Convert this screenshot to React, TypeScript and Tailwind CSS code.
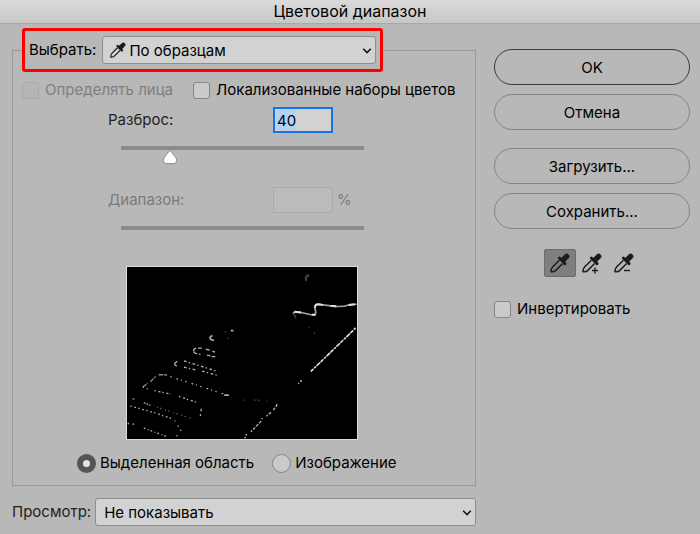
import React, { useState } from 'react';
import clsx from 'clsx';

const PREVIEW_MODES = ['Не показывать', 'Градации серого', 'Черная подложка', 'Белая подложка'];
const SELECT_MODES = ['По образцам', 'Красные', 'Желтые', 'Зеленые', 'Света', 'Тени'];

interface DropperProps {
  sign?: 'plus' | 'minus';
  className?: string;
}

function Dropper({ sign, className }: DropperProps) {
  return (
    <svg viewBox="0 0 20 20" className={className} fill="none" aria-hidden="true">
      <path
        d="M9.4 7.2 2.6 14Q.8 15.8 1 18.8Q4 19.2 5.8 17.4L12.6 10.4"
        stroke="#1c1c1c"
        strokeWidth="1.5"
        strokeLinejoin="round"
      />
      <path d="M9.4 5 15 10.6" stroke="#1c1c1c" strokeWidth="3" strokeLinecap="round" />
      <path d="M11.4 8.6 14.4 5.6" stroke="#1c1c1c" strokeWidth="5" />
      <path d="M14.2 5.8 16.6 3.4" stroke="#1c1c1c" strokeWidth="5.4" strokeLinecap="round" />
      {sign && <path d="M10 17.5h6" stroke="#1c1c1c" strokeWidth="1.4" />}
      {sign === 'plus' && <path d="M13 14.5v6" stroke="#1c1c1c" strokeWidth="1.4" />}
    </svg>
  );
}

interface DropdownProps {
  id: string;
  options: string[];
  icon?: React.ReactNode;
}

function Dropdown({ id, options, icon }: DropdownProps) {
  return (
    <div className="relative min-w-0 flex-1">
      {icon && <span className="pointer-events-none absolute inset-y-0 left-2 flex items-center">{icon}</span>}
      <select
        id={id}
        className={clsx(
          'block h-7 w-full appearance-none rounded-[3px] border border-[#8e8e8e] bg-[#d2d2d2] pr-6 pt-0.5 text-black outline-none',
          icon ? 'pl-[26px]' : 'pl-2'
        )}
      >
        {options.map((option) => (
          <option key={option}>{option}</option>
        ))}
      </select>
      <svg
        viewBox="0 0 10 6"
        className="pointer-events-none absolute right-1 top-3 h-[6px] w-[10px]"
        fill="none"
        aria-hidden="true"
      >
        <path d="M1.2 .8 5 4.6 8.8 .8" stroke="#111" strokeWidth="1.5" />
      </svg>
    </div>
  );
}

interface CheckProps {
  label: string;
  disabled?: boolean;
}

function Check({ label, disabled }: CheckProps) {
  return (
    <label className={clsx('flex items-center gap-1.5', disabled && 'text-[#7f7f7f]')}>
      <input
        type="checkbox"
        disabled={disabled}
        className="size-[17px] shrink-0 appearance-none rounded-[3px] border border-[#868686] bg-[#cbcacb] checked:bg-[#555] disabled:border-[#a9a9a9] disabled:bg-[#b5b5b5]"
      />
      <span className="whitespace-nowrap">{label}</span>
    </label>
  );
}

interface ViewRadioProps {
  label: string;
  defaultChecked?: boolean;
}

function ViewRadio({ label, defaultChecked }: ViewRadioProps) {
  return (
    <label className="flex items-center gap-1">
      <input
        type="radio"
        name="view"
        defaultChecked={defaultChecked}
        className="size-[19px] appearance-none rounded-full border border-[#868686] bg-[#cbcacb] checked:border-6 checked:border-[#555] checked:bg-[#e6e6e6]"
      />
      <span className="whitespace-nowrap">{label}</span>
    </label>
  );
}

interface RangeProps {
  label: string;
  value: number;
  max: number;
  disabled?: boolean;
  onChange?: (value: number) => void;
}

function Range({ label, value, max, disabled, onChange }: RangeProps) {
  return (
    <div className="relative h-5 w-full">
      <div className="h-1 bg-[#8b8b8b]" />
      {!disabled && (
        <svg
          viewBox="0 0 16 16"
          className="absolute top-1 size-4 -translate-x-1/2"
          style={{ left: `${(value / max) * 100}%` }}
          aria-hidden="true"
        >
          <path
            d="M8 .8Q8.6 .8 9.1 1.6L13.6 7.3Q14.8 9 14.6 10.8Q14.3 13.6 12 13.6H4Q1.7 13.6 1.4 10.8Q1.2 9 2.4 7.3L6.9 1.6Q7.4 .8 8 .8Z"
            fill="#fff"
            stroke="#8d8d8d"
          />
        </svg>
      )}
      <input
        type="range"
        aria-label={label}
        min={0}
        max={max}
        value={value}
        disabled={disabled}
        onChange={(e) => onChange?.(Number(e.target.value))}
        className="absolute inset-0 w-full opacity-0"
      />
    </div>
  );
}

function RangeMask() {
  return (
    <svg
      viewBox="18 18 696 522"
      className="h-[174px] w-[232px] border border-[#dcdcdc] bg-black"
      fill="none"
      stroke="#b4b4b4"
      strokeWidth="4"
      aria-hidden="true"
    >
      {/* fingers */}
      <path d="M332 211h8M276 226Q264 232 272 238L281 241" strokeWidth="5" />
      <path d="M316 213v4M323 232v4" stroke="#444" />
      <path d="M219 274Q219 264 230 264L244 264M256 267l12 3M276 273l8 3M219 275Q222 282 240 283M260 286l10 1M274 290h11" strokeDasharray="14 5" />
      <path d="M170 304Q154 313 168 319" />
      <path d="M190 303 292 335M190 322 228 331M245 334 295 348" strokeDasharray="8 7 4 8" />
      <path d="M65 382 80 370M88 366 104 350M113 345H135" strokeDasharray="14 3" stroke="#8a8a8a" />
      <path d="M135 346 312 404" strokeDasharray="3 11 4 16 5 9" />
      <path d="M312 407h14" strokeWidth="5" />
      <path d="M65 382 80 388M100 393 150 404M175 411 232 430" strokeDasharray="4 9 6 6" />
      <path d="M242 448v8M240 465v5" />
      <path d="M34 418h5M68 430 88 438" strokeDasharray="5 4" />
      <path d="M108 443 212 478" stroke="#666" strokeDasharray="3 7 4 12" />
      <path d="M27 440 100 460 155 479M161 485h3M172 499v4M180 512v5M170 529 161 538" strokeDasharray="4 9 5 7" />
      <path d="M19 493h4M34 495h5M68 507 136 532" strokeDasharray="5 8 3 6" />

      {/* wrist and sleeve */}
      <path d="M570 43Q556 44 561 60" stroke="#444" strokeWidth="7" />
      <path
        d="M523 160Q520 154 530 154L545 156 572 162 588 163Q592 156 587 143Q586 131 598 131L635 136Q670 141 690 133L714 131"
        stroke="#a6a6a6"
        strokeWidth="5"
      />
      <path d="M526 154 545 156M578 163h10M588 142Q586 131 598 131L612 133M635 136 652 137M690 133 708 131" stroke="#e2e2e2" strokeWidth="6" />
      <path d="M523 160 530 173M570 201v3M584 219h4" stroke="#444" />
      <path d="M575 335 712 202" stroke="#a0a0a0" strokeWidth="3" />
      <path d="M575 335 712 202" stroke="#dedede" strokeWidth="5" strokeDasharray="10 5 6 4 14 3" />
      <path d="M542 364h6M536 371h4" />
      <path d="M370 422h5M401 422h24M440 425h4" stroke="#333" strokeDasharray="8 4" />
      <path d="M471 434v5L461 452M454 459 440 471M427 476v4M424 486 393 518M379 525v5M373 536h5" strokeDasharray="9 4" />
    </svg>
  );
}

const pill = 'h-9 w-full rounded-full border pt-0.5 text-center hover:bg-[#c2c2c2]';

export default function App() {
  const [fuzziness, setFuzziness] = useState(40);
  const [tool, setTool] = useState(0);

  return (
    <div className="min-h-screen bg-[#b8b8b8] font-['Inter','Liberation_Sans',sans-serif] text-[15px] leading-5 text-black">
      <header className="h-6 border-b border-[#a9a9a9] bg-linear-to-b from-[#dadada] to-[#c8c7c8]">
        <h1 className="pt-px text-center text-base leading-5">Цветовой диапазон</h1>
      </header>

      <main className="flex gap-[18px] pl-3 pr-[10px] pt-1">
        <div className="min-w-0 flex-1">
          <fieldset className="min-w-0 border border-[#999] px-[9px] pb-3">
            <legend className="flex w-[361px] items-center gap-1.5 rounded-[3px] border-3 border-[#fe0000] py-[5px] pl-1 pr-1">
              <label htmlFor="select-mode">Выбрать:</label>
              <Dropdown id="select-mode" options={SELECT_MODES} icon={<Dropper className="size-4" />} />
            </legend>

            <div className="flex gap-5 pt-2">
              <Check label="Определять лица" disabled />
              <Check label="Локализованные наборы цветов" />
            </div>

            <div className="ml-[86px] w-[256px] pt-1.5">
              <div className="flex h-7 items-center">
                <label htmlFor="fuzziness" className="w-[165px] text-[#222]">
                  Разброс:
                </label>
                <input
                  id="fuzziness"
                  value={fuzziness}
                  onChange={(e) => setFuzziness(Math.min(200, Number(e.target.value) || 0))}
                  className="h-[26px] w-[60px] border-2 border-[#1473e6] bg-[#d2d2d2] bg-[linear-gradient(#b3d3f2,#b3d3f2)] bg-[length:20px_20px] bg-[position:1px_1px] bg-no-repeat px-0.5 outline-none"
                />
              </div>
              <div className="pl-[13px] pt-3">
                <Range label="Разброс" value={fuzziness} max={200} onChange={setFuzziness} />
              </div>
            </div>

            <div className="ml-[86px] w-[256px] pt-5 text-[#7b7b7b]">
              <div className="flex h-7 items-center">
                <label htmlFor="range" className="w-[165px]">
                  Диапазон:
                </label>
                <input id="range" disabled className="h-[26px] w-[60px] border border-[#a9a9a9] bg-[#bbb] px-1" />
                <span className="pl-1">%</span>
              </div>
              <div className="pl-[13px] pt-3">
                <Range label="Диапазон" value={0} max={100} disabled />
              </div>
            </div>

            <div className="flex justify-center pr-1 pt-5">
              <RangeMask />
            </div>

            <div className="flex gap-[18px] pl-[55px] pt-[13px]">
              <ViewRadio label="Выделенная область" defaultChecked />
              <ViewRadio label="Изображение" />
            </div>
          </fieldset>

          <div className="flex items-center gap-1 pt-3">
            <label htmlFor="preview-mode" className="text-[#222]">
              Просмотр:
            </label>
            <Dropdown id="preview-mode" options={PREVIEW_MODES} />
          </div>
        </div>

        <aside className="flex w-[196px] shrink-0 flex-col pt-[21px]">
          <div className="flex flex-col gap-[9px]">
            <button type="button" className={clsx(pill, 'border-[#3c3c3c]')}>OK</button>
            <button type="button" className={clsx(pill, 'border-[#868686]')}>Отмена</button>
          </div>
          <div className="flex flex-col gap-[9px] pt-[18px]">
            <button type="button" className={clsx(pill, 'border-[#868686]')}>Загрузить...</button>
            <button type="button" className={clsx(pill, 'border-[#868686]')}>Сохранить...</button>
          </div>

          <div className="flex justify-center pt-5">
            {(['Пипетка', 'Добавить к образцу', 'Вычесть из образца'] as const).map((name, i) => (
              <button
                key={name}
                type="button"
                aria-label={name}
                onClick={() => setTool(i)}
                className={clsx(
                  'flex h-7 w-8 items-center justify-center rounded-[2px] border',
                  tool === i ? 'border-[#6c6c6c] bg-[#7f7f7f]' : 'border-transparent'
                )}
              >
                <Dropper
                  className="size-5 overflow-visible"
                  sign={i === 1 ? 'plus' : i === 2 ? 'minus' : undefined}
                />
              </button>
            ))}
          </div>

          <div className="pt-[22px]">
            <Check label="Инвертировать" />
          </div>
        </aside>
      </main>
    </div>
  );
}
